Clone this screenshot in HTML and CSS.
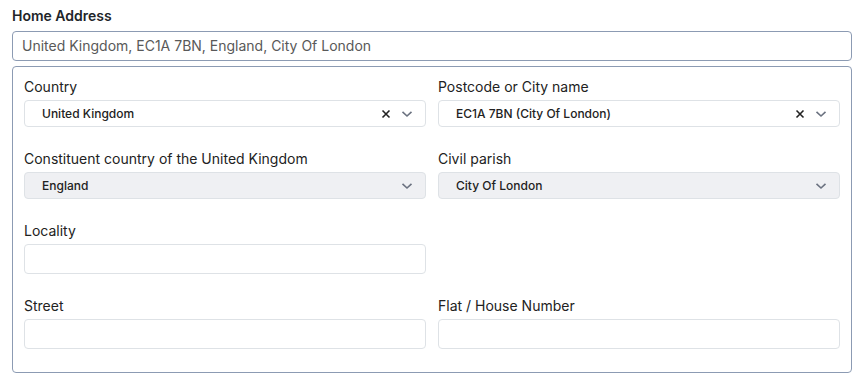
FILE: index.html
```html
<!DOCTYPE html>
<html lang="en">
<head>
  <meta charset="UTF-8">
  <meta name="viewport" content="width=device-width, initial-scale=1.0">
  <title>Home Address</title>
  <link rel="stylesheet" href="styles.css">
</head>
<body>
  <div class="address-field">
    <label class="field-title">Home Address</label>
    <div class="summary">United Kingdom, EC1A 7BN, England, City Of London</div>

    <div class="address-box">
      <div class="field">
        <label>Country</label>
        <div class="select">
          <span class="select-value">United Kingdom</span>
          <span class="select-clear">
            <svg width="10" height="10" viewBox="0 0 10 10"><path d="M1.5 1.5 L8.5 8.5 M8.5 1.5 L1.5 8.5" stroke="#222" stroke-width="1.6" fill="none"/></svg>
          </span>
          <span class="select-arrow">
            <svg width="12" height="8" viewBox="0 0 12 8"><path d="M1.5 1.8 L6 6 L10.5 1.8" stroke="#6b7280" stroke-width="1.6" fill="none"/></svg>
          </span>
        </div>
      </div>

      <div class="field">
        <label>Postcode or City name</label>
        <div class="select">
          <span class="select-value">EC1A 7BN (City Of London)</span>
          <span class="select-clear">
            <svg width="10" height="10" viewBox="0 0 10 10"><path d="M1.5 1.5 L8.5 8.5 M8.5 1.5 L1.5 8.5" stroke="#222" stroke-width="1.6" fill="none"/></svg>
          </span>
          <span class="select-arrow">
            <svg width="12" height="8" viewBox="0 0 12 8"><path d="M1.5 1.8 L6 6 L10.5 1.8" stroke="#6b7280" stroke-width="1.6" fill="none"/></svg>
          </span>
        </div>
      </div>

      <div class="field">
        <label>Constituent country of the United Kingdom</label>
        <div class="select disabled">
          <span class="select-value">England</span>
          <span class="select-arrow">
            <svg width="12" height="8" viewBox="0 0 12 8"><path d="M1.5 1.8 L6 6 L10.5 1.8" stroke="#6b7280" stroke-width="1.6" fill="none"/></svg>
          </span>
        </div>
      </div>

      <div class="field">
        <label>Civil parish</label>
        <div class="select disabled">
          <span class="select-value">City Of London</span>
          <span class="select-arrow">
            <svg width="12" height="8" viewBox="0 0 12 8"><path d="M1.5 1.8 L6 6 L10.5 1.8" stroke="#6b7280" stroke-width="1.6" fill="none"/></svg>
          </span>
        </div>
      </div>

      <div class="field">
        <label>Locality</label>
        <input class="text-input" type="text">
      </div>
      <div class="field"></div>

      <div class="field">
        <label>Street</label>
        <input class="text-input" type="text">
      </div>

      <div class="field">
        <label>Flat / House Number</label>
        <input class="text-input" type="text">
      </div>
    </div>
  </div>
</body>
</html>
```

FILE: styles.css
```css
body {
  margin: 0;
  padding: 0;
  font-family: Inter, "Noto Sans", sans-serif;
  background-color: #ffffff;
  color: #212529;
}

.address-field {
  padding: 6px 9px 0 12px;
}

.field-title {
  display: block;
  font-size: 14px;
  font-weight: 600;
  line-height: 20px;
  margin-bottom: 5px;
}

.summary {
  height: 28px;
  line-height: 28px;
  border: 1px solid #8c9bb3;
  border-radius: 4px;
  padding: 0 9px;
  font-size: 14px;
  color: #595959;
}

.address-box {
  margin-top: 5px;
  border: 1px solid #8c9bb3;
  border-radius: 4px;
  padding: 10px 11px 23px 11px;
  display: grid;
  grid-template-columns: 1fr 1fr;
  column-gap: 12px;
  row-gap: 22px;
}

.field label {
  display: block;
  font-size: 14px;
  line-height: 20px;
  margin-bottom: 3px;
  color: #222;
}

.select {
  display: flex;
  align-items: center;
  height: 25px;
  border: 1px solid #dee2e6;
  border-radius: 4px;
  padding: 0 12px 0 17px;
  font-size: 12px;
  font-weight: 500;
  color: #222;
}

.select.disabled {
  background-color: #eff0f3;
}

.select-value {
  flex: 1;
}

.select-clear {
  display: flex;
  margin-right: 10px;
}

.select-arrow {
  display: flex;
}

.text-input {
  display: block;
  box-sizing: border-box;
  width: 100%;
  height: 30px;
  margin: 0;
  border: 1px solid #dee2e6;
  border-radius: 4px;
  background: #fff;
}
```
